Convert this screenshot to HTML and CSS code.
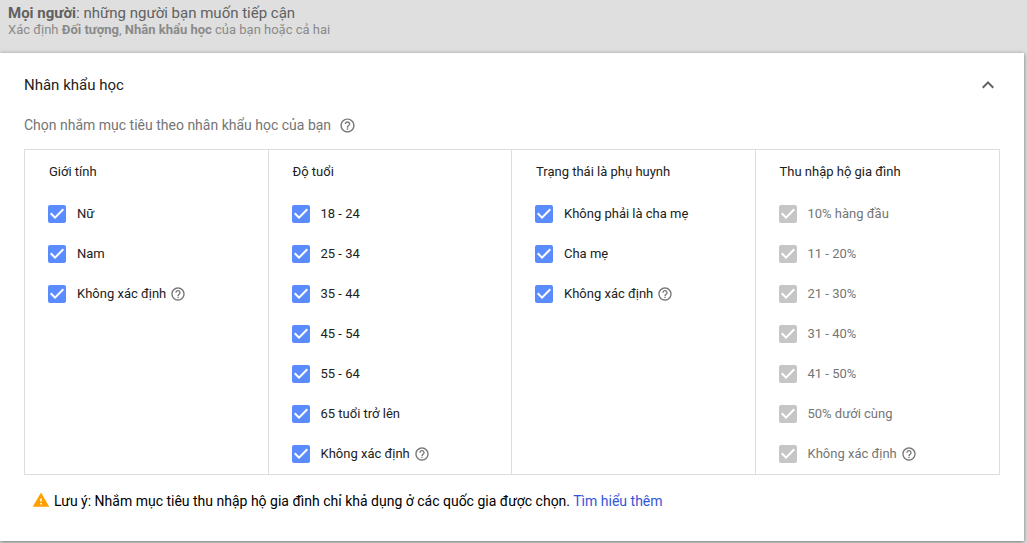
FILE: index.html
```html
<!DOCTYPE html>
<html lang="vi">

<head>
    <meta charset="utf-8">
    <meta name="viewport" content="width=device-width, initial-scale=1.0">
    <title>Nhân khẩu học</title>
    <link rel="stylesheet" href="styles.css">
</head>

<body>
    <svg class="defs">
        <symbol id="check" viewBox="0 0 24 24">
            <path d="M19 3H5c-1.1 0-2 .9-2 2v14c0 1.1.9 2 2 2h14c1.1 0 2-.9 2-2V5c0-1.1-.9-2-2-2zm-9 14l-5-5 1.41-1.41L10 14.17l7.59-7.59L19 8l-9 9z" />
        </symbol>
        <symbol id="help" viewBox="0 0 24 24">
            <path d="M11 18h2v-2h-2v2zm1-16C6.48 2 2 6.48 2 12s4.48 10 10 10 10-4.48 10-10S17.52 2 12 2zm0 18c-4.41 0-8-3.59-8-8s3.59-8 8-8 8 3.59 8 8-3.59 8-8 8zm0-14c-2.21 0-4 1.79-4 4h2c0-1.1.9-2 2-2s2 .9 2 2c0 2-3 1.75-3 5h2c0-2.25 3-2.5 3-5 0-2.21-1.79-4-4-4z" />
        </symbol>
    </svg>

    <header>
        <h1><b>Mọi người</b>: những người bạn muốn tiếp cận</h1>
        <p>Xác định <b>Đối tượng</b>, <b>Nhân khẩu học</b> của bạn hoặc cả hai</p>
    </header>

    <section class="card">
        <div class="top">
            <h2>Nhân khẩu học</h2>
            <svg class="arrow" viewBox="0 0 24 24"><path d="M12 8l-6 6 1.41 1.41L12 10.83l4.59 4.58L18 14z" /></svg>
        </div>

        <div class="intro">
            <span>Chọn nhắm mục tiêu theo nhân khẩu học của bạn</span>
            <svg class="help"><use href="#help" /></svg>
        </div>

        <div class="grid">
            <div class="col">
                <h3>Giới tính</h3>
                <div class="row"><svg class="check"><use href="#check" /></svg><span>Nữ</span></div>
                <div class="row"><svg class="check"><use href="#check" /></svg><span>Nam</span></div>
                <div class="row"><svg class="check"><use href="#check" /></svg><span>Không xác định</span><svg class="help"><use href="#help" /></svg></div>
            </div>
            <div class="col">
                <h3>Độ tuổi</h3>
                <div class="row"><svg class="check"><use href="#check" /></svg><span>18 - 24</span></div>
                <div class="row"><svg class="check"><use href="#check" /></svg><span>25 - 34</span></div>
                <div class="row"><svg class="check"><use href="#check" /></svg><span>35 - 44</span></div>
                <div class="row"><svg class="check"><use href="#check" /></svg><span>45 - 54</span></div>
                <div class="row"><svg class="check"><use href="#check" /></svg><span>55 - 64</span></div>
                <div class="row"><svg class="check"><use href="#check" /></svg><span>65 tuổi trở lên</span></div>
                <div class="row"><svg class="check"><use href="#check" /></svg><span>Không xác định</span><svg class="help"><use href="#help" /></svg></div>
            </div>
            <div class="col">
                <h3>Trạng thái là phụ huynh</h3>
                <div class="row"><svg class="check"><use href="#check" /></svg><span>Không phải là cha mẹ</span></div>
                <div class="row"><svg class="check"><use href="#check" /></svg><span>Cha mẹ</span></div>
                <div class="row"><svg class="check"><use href="#check" /></svg><span>Không xác định</span><svg class="help"><use href="#help" /></svg></div>
            </div>
            <div class="col disabled">
                <h3>Thu nhập hộ gia đình</h3>
                <div class="row"><svg class="check"><use href="#check" /></svg><span>10% hàng đầu</span></div>
                <div class="row"><svg class="check"><use href="#check" /></svg><span>11 - 20%</span></div>
                <div class="row"><svg class="check"><use href="#check" /></svg><span>21 - 30%</span></div>
                <div class="row"><svg class="check"><use href="#check" /></svg><span>31 - 40%</span></div>
                <div class="row"><svg class="check"><use href="#check" /></svg><span>41 - 50%</span></div>
                <div class="row"><svg class="check"><use href="#check" /></svg><span>50% dưới cùng</span></div>
                <div class="row"><svg class="check"><use href="#check" /></svg><span>Không xác định</span><svg class="help"><use href="#help" /></svg></div>
            </div>
        </div>

        <div class="note">
            <svg class="warning" viewBox="0 0 24 24"><path d="M1 21h22L12 2 1 21zm12-3h-2v-2h2v2zm0-4h-2v-4h2v4z" /></svg>
            <p>Lưu ý: Nhắm mục tiêu thu nhập hộ gia đình chỉ khả dụng ở các quốc gia được chọn. <a href="#">Tìm hiểu thêm</a></p>
        </div>
    </section>
</body>

</html>
```
FILE: styles.css
```css
* {
    box-sizing: border-box;
}

body {
    margin: 0;
    height: 543px;
    overflow: hidden;
    background-color: #dfdfdf;
    font-family: Roboto, sans-serif;
    font-size: 13px;
    color: #212121;
}

h1,
h2,
h3,
p {
    margin: 0;
    font-weight: 400;
}

.defs {
    display: none;
}

svg {
    flex: none;
    fill: currentColor;
}

header {
    height: 53px;
    padding: 4px 8px;
    color: #8a8a8a;
}

header h1 {
    font-size: 15px;
    line-height: 18px;
    color: #616161;
}

header p {
    font-size: 13px;
    line-height: 16px;
}

.card {
    width: 1024px;
    height: 488px;
    padding: 0 24px;
    background-color: white;
    box-shadow: 0 1px 4px rgba(0, 0, 0, .5);
}

.top {
    display: flex;
    justify-content: space-between;
    align-items: center;
    height: 64px;
}

h2 {
    font-size: 15px;
}

.arrow {
    width: 24px;
    height: 24px;
    color: #616161;
}

.intro {
    display: flex;
    align-items: center;
    height: 16px;
    font-size: 14px;
    color: #757575;
}

.intro .help {
    width: 17px;
    height: 17px;
    margin-left: 8px;
}

.grid {
    display: grid;
    grid-template-columns: 243.5px 243.5px 243.5px 1fr;
    height: 326px;
    margin-top: 16px;
    border: 1px solid #dcdcdc;
    border-left: none;
}

.col {
    padding-left: 24px;
    border-left: 1px solid #dcdcdc;
}

h3 {
    font-size: 13px;
    line-height: 44px;
}

.row {
    display: flex;
    align-items: center;
    height: 40px;
}

.row span {
    padding-bottom: 2px;
}

.check {
    width: 24px;
    height: 24px;
    margin: 0 8px 0 -4px;
    color: #5a8cff;
}

.help {
    width: 16px;
    height: 16px;
    margin-left: 4px;
    color: #757575;
}

.disabled .row {
    color: #757575;
}

.disabled .check {
    color: #c6c6c6;
}

.note {
    display: flex;
    align-items: center;
    height: 52px;
    padding-left: 8px;
    font-size: 14px;
    color: black;
}

.warning {
    width: 18px;
    height: 18px;
    margin: 0 4px 2px 0;
    color: #ffa000;
}

.note a {
    color: #3355d8;
    text-decoration: none;
}
```
